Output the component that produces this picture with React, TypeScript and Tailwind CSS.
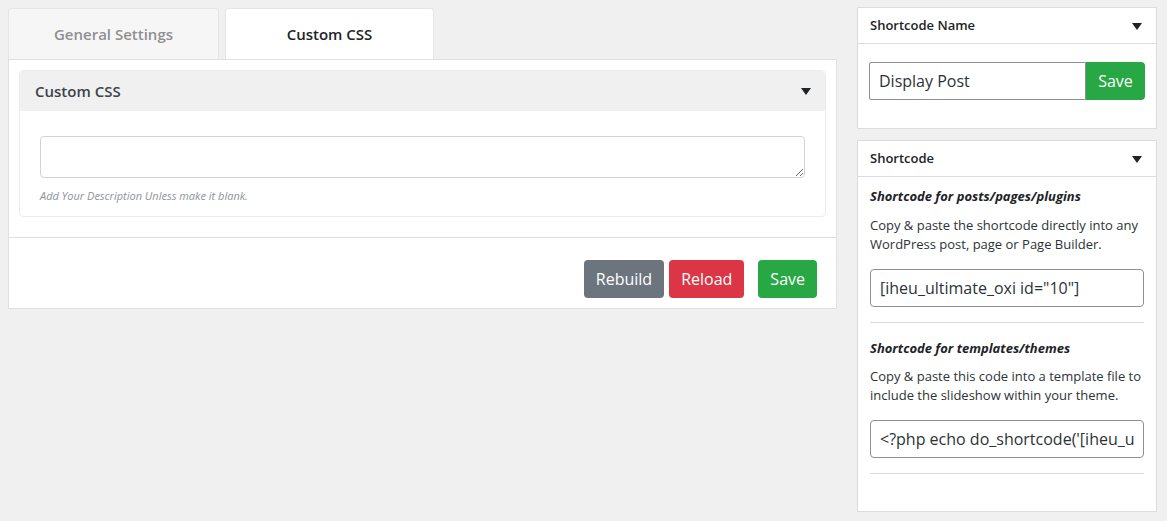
import { useState } from "react";

const font = { fontFamily: '"Open Sans", "Noto Sans", sans-serif' };

function Caret() {
  return (
    <svg width="10" height="7" viewBox="0 0 10 7" className="shrink-0">
      <path d="M0 0h10L5 7z" fill="#1d2327" />
    </svg>
  );
}

function SideBox({ title, children }: { title: string; children: React.ReactNode }) {
  return (
    <div className="border border-[#dcdcde] bg-white">
      <div className="flex h-[36px] items-center justify-between border-b border-[#dcdcde] pl-[12px] pr-[14px] pt-[1px]">
        <div className="text-[13px] font-semibold text-[#1d2327]">{title}</div>
        <Caret />
      </div>
      {children}
    </div>
  );
}

export default function App() {
  const [tab, setTab] = useState<"general" | "css">("css");

  return (
    <div className="min-h-[521px] w-[1167px] bg-[#f0f0f1]" style={font}>
      <div className="flex items-start gap-[20px] pl-[8px] pt-[7px]">
        {/* Main column */}
        <div className="w-[829px]">
          <div className="flex items-end gap-[6px] pt-[1px]">
            <button
              onClick={() => setTab("general")}
              className={
                tab === "general"
                  ? "h-[51px] w-[210px] rounded-t-[4px] border border-b-0 border-[#e5e5e5] bg-white text-[15px] font-semibold text-[#1d2327]"
                  : "h-[51px] w-[211px] rounded-t-[4px] border border-b-0 border-[#e5e5e5] bg-[#f6f6f6] text-[15px] font-semibold text-[#8f8f8f]"
              }
            >
              General Settings
            </button>
            <button
              onClick={() => setTab("css")}
              className={
                tab === "css"
                  ? "h-[51px] w-[209px] rounded-t-[4px] border border-b-0 border-[#e5e5e5] bg-white text-[15px] font-semibold text-[#1d2327]"
                  : "h-[51px] w-[209px] rounded-t-[4px] border border-b-0 border-[#e5e5e5] bg-[#f6f6f6] text-[15px] font-semibold text-[#8f8f8f]"
              }
            >
              Custom CSS
            </button>
          </div>

          <div className="border border-[#e0e0e0] bg-white">
            <div className="px-[10px] pt-[10px] pb-[20px]">
              <div className="rounded-[4px] border border-[#ececec]">
                <div className="flex h-[40px] items-center justify-between rounded-t-[4px] bg-[#f0f0f0] pl-[15px] pr-[14px]">
                  <div className="text-[15px] font-semibold text-[#3c434a]">Custom CSS</div>
                  <Caret />
                </div>
                <div className="px-[20px] pt-[25px] pb-[11px]">
                  <textarea className="block h-[42px] w-full resize-y rounded-[4px] border border-[#cfd4d9] bg-white" />
                  <div className="mt-[10px] text-[11px] italic text-[#8c949b]">
                    Add Your Description Unless make it blank.
                  </div>
                </div>
              </div>
            </div>
            <div className="flex justify-end gap-[5px] border-t border-[#e0e0e0] pt-[22px] pb-[10px] pr-[19px]">
              <button className="h-[38px] rounded-[4px] bg-[#6c757d] px-[12px] text-[16px] text-white">Rebuild</button>
              <button className="h-[38px] rounded-[4px] bg-[#dc3545] px-[12px] text-[16px] text-white">Reload</button>
              <button className="ml-[9px] h-[38px] rounded-[4px] bg-[#28a745] px-[12px] text-[16px] text-white">Save</button>
            </div>
          </div>
        </div>

        {/* Sidebar */}
        <div className="flex w-[300px] flex-col gap-[11px]">
          <SideBox title="Shortcode Name">
            <div className="flex px-[11px] pt-[18px] pb-[28px]">
              <input
                defaultValue="Display Post"
                className="h-[38px] w-[217px] rounded-l-[2px] border border-[#8c8f94] px-[9px] text-[16px] text-[#2c3338] outline-none"
              />
              <button className="h-[38px] flex-1 rounded-r-[4px] bg-[#28a745] text-[16px] text-white">Save</button>
            </div>
          </SideBox>

          <SideBox title="Shortcode">
            <div className="px-[12px] pt-[10px] pb-[37px] text-[#2c3338]">
              <div className="text-[13px] font-bold italic text-[#1d2327]">Shortcode for posts/pages/plugins</div>
              <p className="mt-[9px] text-[13px] leading-[19px]">
                Copy &amp; paste the shortcode directly into any WordPress post, page or Page Builder.
              </p>
              <input
                readOnly
                value={'[iheu_ultimate_oxi id="10"]'}
                className="mt-[15px] h-[38px] w-full rounded-[4px] border border-[#8c8f94] px-[9px] text-[16px] text-[#2c3338] outline-none"
              />
              <div className="mt-[15px] border-t border-[#dcdcde]" />
              <div className="mt-[16px] text-[13px] font-bold italic text-[#1d2327]">
                Shortcode for templates/themes
              </div>
              <p className="mt-[9px] text-[13px] leading-[19px]">
                Copy &amp; paste this code into a template file to include the slideshow within your theme.
              </p>
              <input
                readOnly
                value={"<?php echo do_shortcode('[iheu_ultimate_oxi id=\"10\"]'); ?>"}
                className="mt-[15px] h-[38px] w-full rounded-[4px] border border-[#8c8f94] px-[9px] text-[16px] text-[#2c3338] outline-none"
              />
              <div className="mt-[15px] border-t border-[#dcdcde]" />
            </div>
          </SideBox>
        </div>
      </div>
    </div>
  );
}
